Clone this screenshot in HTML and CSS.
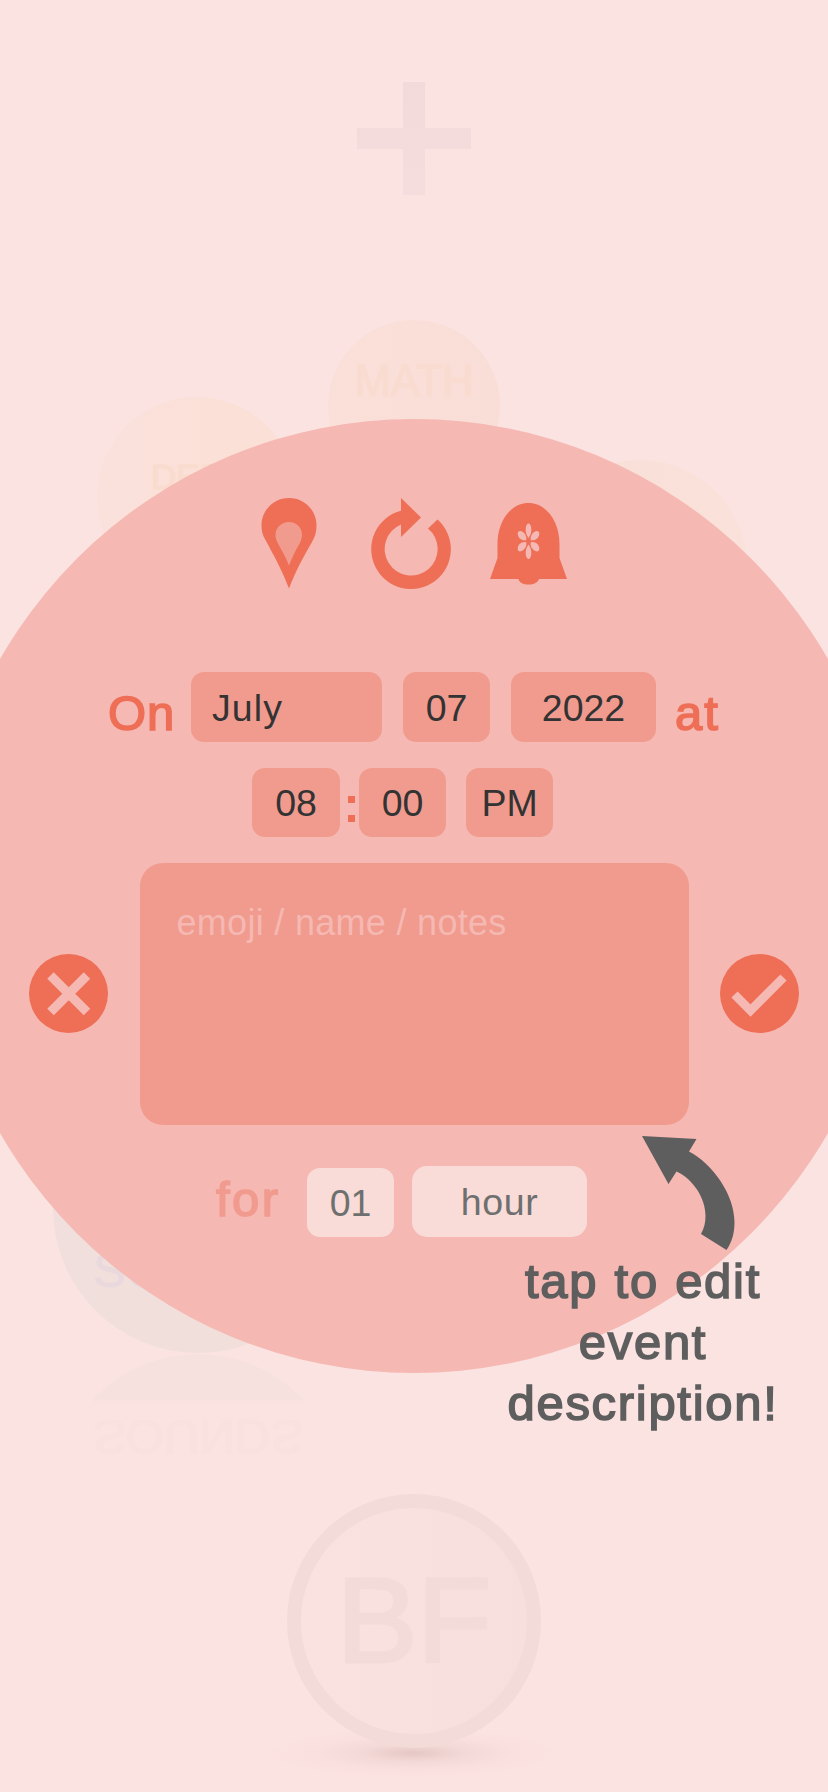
FILE: index.html
```html
<!DOCTYPE html>
<html lang="en">
<head>
<meta charset="utf-8">
<title>New event</title>
<link rel="stylesheet" href="styles.css">
</head>
<body>
<main class="screen">
  <div class="backdrop">
    <svg class="plus" viewBox="0 0 114 113"><defs><linearGradient id="pg" x1="0" y1="0" x2="0" y2="1"><stop offset="0" stop-color="#f2dada"/><stop offset="1" stop-color="#f6dddd"/></linearGradient></defs><path fill="url(#pg)" d="M46 0h22v46h46v21H68v46H46V67H0V46h46z"/></svg>
    <div class="bubble math"><span>MATH</span></div>
    <div class="bubble design"><span>DEB</span></div>
    <div class="bubble plain"></div>
    <div class="bubble sounds"><span>SOUNDS</span></div>
    <div class="reflection"><div class="bubble mirrored"><span>SOUNDS</span></div></div>
    <div class="shadow"></div>
    <div class="badge"><span>BF</span></div>
  </div>

  <form class="dial">
    <div class="tools">
      <svg class="pin" viewBox="0 0 56 91"><path fill="#ee6e56" d="M28 0C43 0 55.500 12 55.500 27.500C55.500 34 54 38.500 51 44C43 58 35 72 28 90.500C21 72 12 56 4.500 42C1.500 37 .5 33 .5 27.500C.5 12 13 0 28 0z"/><path fill="#f19b8f" d="M28 24C35.500 24 41 29.500 41 37C41 40.500 39.500 44 37.500 47.500C34 53.500 31 60 28 67.500C25 60 21.500 53.500 17.500 46.500C15.500 43 14.500 40.500 14.500 37C14.500 29.500 20.500 24 28 24z"/></svg>
      <svg class="repeat" viewBox="0 0 80 91"><path fill="#ee6e56" d="M30 0L50 19.500L30 39V26.500A26.500 26.500 0 1 0 57 30.500L66.500 21.500A39.800 39.800 0 1 1 30 12.700z"/></svg>
      <svg class="bell" viewBox="0 0 77 82"><path fill="#ee6e56" d="M38.500 0C56 0 69.500 18 69.500 41V55L77 76H49C48 79.500 44 81.500 38.500 81.500C33 81.500 29 79.500 28.500 76H0L7.500 55V41C7.500 18 21 0 38.500 0z"/><g fill="#f5b8b2"><path id="petal" d="M38.500 35C36 31.500 35.700 29 35.700 26.500C35.700 23 37 20.500 38.500 20.500S41.300 23 41.300 26.500C41.300 29 41 31.500 38.500 35z"/><use href="#petal" transform="rotate(180 38.500 38.200)"/><path id="side" d="M36.200 37.200C31 38 27.700 34.500 27.700 30.500C27.700 28.300 29.500 27.500 31.500 28.300C35 30 37 33.500 36.200 37.200z"/><use href="#side" transform="matrix(-1 0 0 1 77 0)"/><use href="#side" transform="matrix(1 0 0 -1 0 76.400)"/><use href="#side" transform="rotate(180 38.500 38.200)"/></g></svg>
    </div>
    <div class="row date">
      <span class="word on">On</span>
      <span class="field month">July</span>
      <span class="field day">07</span>
      <span class="field year">2022</span>
      <span class="word at">at</span>
    </div>
    <div class="row time">
      <span class="field">08</span>
      <span class="colon"><i></i><i></i></span>
      <span class="field">00</span>
      <span class="field meridiem">PM</span>
    </div>
    <div class="row middle">
      <svg class="action" viewBox="0 0 79 79"><circle cx="39.500" cy="39.500" r="39.500" fill="#ee6e56"/><path d="M21.500 21.500L58 58M58 21.500L21.500 58" stroke="#f5b8b2" stroke-width="9.200"/></svg>
      <div class="notes">emoji / name / notes</div>
      <svg class="action" viewBox="0 0 79 79"><circle cx="39.500" cy="39.500" r="39.500" fill="#ee6e56"/><path d="M14.500 40.500L30.500 56.500L63.500 23.500" fill="none" stroke="#f5b8b2" stroke-width="8.800"/></svg>
    </div>
    <div class="row duration">
      <span class="word for">for</span>
      <span class="field soft">01</span>
      <span class="field soft unit">hour</span>
    </div>
  </form>

  <aside class="hint">
    <svg class="arrow" viewBox="0 0 94 115"><path fill="#5e5e5e" d="M0 0L54.500 3L47 15.500C71 28 92.500 59 92.500 86C92.500 97 90 106 84.500 114L59 98C62 92 63.500 87 63.500 80C63.500 62 51 43 34.500 35.500L26.500 48z"/></svg>
    <p>tap to edit<br>event<br>description!</p>
  </aside>
</main>
</body>
</html>
```
FILE: styles.css
```css
* { box-sizing: border-box; }
body { margin: 0; font-family: "Liberation Sans", Arial, sans-serif; }
.screen { position: relative; width: 828px; height: 1792px; overflow: hidden; background: #fbe3e1; padding-top: 419px; }

/* Faded planner canvas behind the dial */
.backdrop { position: absolute; inset: 0; }
.plus { position: absolute; left: 357px; top: 82px; width: 114px; height: 113px; }
.bubble { position: absolute; border-radius: 50%; text-align: center; white-space: nowrap; }
.bubble span { -webkit-text-stroke: 1px currentColor; }
.math { left: 328px; top: 320px; width: 172px; height: 172px; background: linear-gradient(90deg, #fbe0d9, #f9ddd7); color: #f9dbd0; font-size: 43.500px; line-height: 48px; padding-top: 37px; letter-spacing: -.4px; }
.design { left: 97px; top: 397px; width: 200px; height: 200px; background: linear-gradient(90deg, #fae1dc, #fbe0d6 70%, #fae0d9); color: #f9dccd; font-size: 35px; line-height: 40px; padding: 60px 0 0 54px; text-align: left; }
.plain { left: 533px; top: 460px; width: 214px; height: 214px; background: linear-gradient(90deg, #f8ded6, #fae2db); }
.sounds { left: 53px; top: 1063px; width: 290px; height: 290px; background: linear-gradient(90deg, #f1dfdd, #f2dfd9); color: #e9d9dd; font-size: 49px; line-height: 54px; padding-top: 180px; }
.reflection { position: absolute; left: 53px; top: 1354px; width: 290px; height: 120px; }
.mirrored { left: 0; top: 0; width: 290px; height: 290px; background: linear-gradient(0deg, #f7e1df 0, #f7e1de 45px, rgba(250, 226, 224, .5) 48px, rgba(251, 227, 225, 0) 74px); color: #f9e1df; font-size: 49px; line-height: 54px; padding-top: 180px; transform: scaleY(-1); }
.shadow { position: absolute; left: 265px; top: 1728px; width: 296px; height: 50px; background: radial-gradient(closest-side, rgba(140, 90, 90, .2), rgba(150, 100, 100, .08) 35%, rgba(155, 100, 100, .02) 65%, transparent); }
.badge { position: absolute; left: 287px; top: 1494px; width: 254px; height: 254px; border: 14px solid #f3dbda; border-radius: 50%; background: linear-gradient(90deg, #fae2e0, #f7dfdd); color: #f3dbda; font-size: 121px; line-height: 138px; padding-top: 43px; text-align: center; -webkit-text-stroke: 3px #f3dbda; }

/* Event editor */
.dial { position: relative; width: 954px; height: 954px; margin-left: -63px; border-radius: 50%; background: #f5b8b2; display: flex; flex-direction: column; align-items: center; padding-top: 79px; }
.tools { display: flex; align-items: flex-start; width: 306px; height: 93px; gap: 54px; }
.pin { width: 56px; height: 91px; }
.repeat { width: 80px; height: 91px; }
.bell { width: 77px; height: 82px; margin: 5px 0 0 -15px; }
.row { display: flex; }
.word { color: #ee6e56; font-size: 49px; line-height: 56px; letter-spacing: .8px; -webkit-text-stroke: 1.600px currentColor; }
.field { display: block; width: 87px; height: 69px; border-radius: 13px; background: #f19b8f; color: #333; font-size: 37.500px; line-height: 71px; text-align: center; }
.date { width: 828px; height: 70px; margin-top: 81px; padding-left: 108px; }
.date .field { height: 70px; line-height: 72px; }
.on { width: 83px; padding-top: 13px; }
.date .month { width: 191px; text-align: left; padding-left: 21px; letter-spacing: 1.100px; }
.day { margin-left: 21px; }
.date .year { width: 145px; margin-left: 21px; }
.at { margin-left: 19px; padding-top: 13px; letter-spacing: 2px; }
.time { width: 828px; margin-top: 26px; padding-left: 252px; }
.time .field:first-child { width: 88px; }
.colon { width: 19px; display: flex; flex-direction: column; align-items: center; gap: 12px; padding: 28px 0 0 4px; }
.colon i { width: 7px; height: 7px; background: #ee6e56; }
.time .meridiem { margin-left: 20px; line-height: 70px; }
.middle { width: 828px; height: 262px; margin-top: 26px; padding: 0 29px; justify-content: space-between; align-items: center; }
.action { width: 79px; height: 79px; margin-top: -1px; }
.notes { width: 549px; height: 262px; border-radius: 23px; background: #f19b8f; color: #f5b8b2; font-size: 36px; line-height: 42px; letter-spacing: .3px; padding: 39px 37px; }
.duration { width: 828px; margin-top: 41px; padding-left: 216px; }
.for { width: 91px; color: #f19b8f; padding-top: 5px; letter-spacing: 2.500px; }
.soft { background: #f9dbd8; color: #6e706f; margin-top: 2px; }
.unit { width: 175px; height: 71px; margin: 0 0 0 18px; border-radius: 15px; line-height: 73px; letter-spacing: .6px; }

/* Tutorial callout */
.hint { position: absolute; left: 499px; top: 1136px; width: 286px; color: #5e5e5e; }
.arrow { display: block; width: 94px; height: 115px; margin-left: 143px; }
.hint p { margin: 0 -1px 0 1px; font-size: 49px; line-height: 61px; letter-spacing: 1.700px; word-spacing: 1px; text-align: center; -webkit-text-stroke: 1.600px currentColor; }
```
